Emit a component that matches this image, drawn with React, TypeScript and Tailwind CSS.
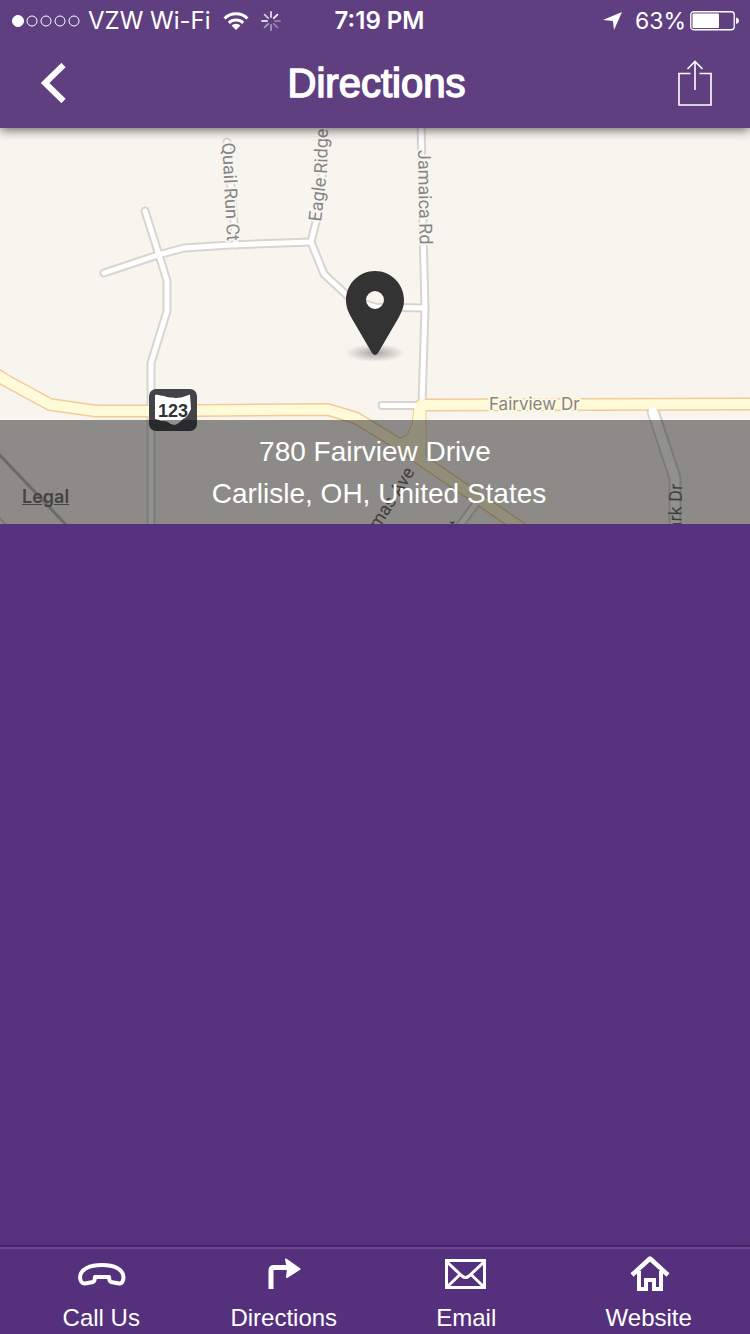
const StatusBar = () => {
  return (
    <div className="grid h-[42px] grid-cols-[1fr_auto_1fr] items-center pl-3 pr-[11px] font-[Inter,sans-serif] text-2xl leading-7">
      <div className="flex items-center">
        <svg className="h-3 w-[68px]" viewBox="0 0 68 12" fill="none" stroke="white">
          <circle cx="6" cy="6" r="5.5" fill="white" />
          <circle cx="20" cy="6" r="5" />
          <circle cx="34" cy="6" r="5" />
          <circle cx="48" cy="6" r="5" />
          <circle cx="62" cy="6" r="5" />
        </svg>
        <span className="ml-2 whitespace-nowrap">VZW Wi-Fi</span>
        <svg className="ml-3 h-[18px] w-[26px]" viewBox="0 0 26 18" fill="none" stroke="white" strokeWidth="3">
          <path d="M1.5 6.5a16.5 16.5 0 0 1 23 0" />
          <path d="M5.800 10.800a10.400 10.400 0 0 1 14.400 0" />
          <path d="M13 18l-4.500-4.500a6.500 6.500 0 0 1 9 0z" fill="white" stroke="none" />
        </svg>
        <svg className="ml-3 h-5 w-5" viewBox="0 0 20 20" stroke="white" strokeWidth="1.8" strokeLinecap="round">
          <path d="M10 1v5" opacity=".8" />
          <path d="M16.400 3.600l-3.600 3.600" />
          <path d="M19 10h-5" opacity=".3" />
          <path d="M16.400 16.400l-3.600-3.600" opacity=".35" />
          <path d="M10 19v-5" opacity=".45" />
          <path d="M3.600 16.400l3.600-3.600" opacity=".5" />
          <path d="M1 10h5" opacity=".8" />
          <path d="M3.600 3.600l3.600 3.600" opacity=".7" />
        </svg>
      </div>
      <span className="pl-2 font-semibold">7:19 PM</span>
      <div className="flex items-center justify-end">
        <svg className="mr-3 h-[18px] w-5" viewBox="0 0 20 18" fill="white">
          <path d="M19 0L11 18L10 9L0 8z" />
        </svg>
        <span className="text-[23px]">63%</span>
        <svg className="ml-1 h-5 w-[49px]" viewBox="0 0 49 20">
          <rect x=".75" y=".75" width="43.5" height="18" rx="3" fill="none" stroke="white" strokeWidth="1.3" />
          <rect x="2.5" y="2.5" width="26.5" height="14.5" rx="1" fill="white" />
          <path d="M46 6.500c4 1 4 5.500 0 6.500z" fill="white" />
        </svg>
      </div>
    </div>
  );
};

const NavBar = () => {
  return (
    <div className="flex h-[86px] items-center justify-between pb-1 pl-[41px] pr-[38px]">
      <button type="button" aria-label="Back" className="flex w-[34px] items-center">
        <svg className="h-10 w-[25px]" viewBox="0 0 25 40" fill="none" stroke="white" strokeWidth="6">
          <path d="M22.500 2L4 20l18.500 18" />
        </svg>
      </button>
      <h1 className="text-[40px] leading-[44px] [-webkit-text-stroke:1.5px_white]">Directions</h1>
      <button type="button" aria-label="Share" className="flex w-[34px] items-center">
        <svg className="h-[46px] w-[34px]" viewBox="0 0 34 46" fill="none" stroke="white" strokeWidth="1.6">
          <path d="M12.500 13.500H1v31.500h32V13.500H21.500" />
          <path d="M17 30V1.500M9.500 9L17 1.500L24.500 9" />
        </svg>
      </button>
    </div>
  );
};

const minorRoads = [
  "M227 142L236 245",
  "M104 273L158 255L184 248L230 245L311 242",
  "M145 211L159 255L167 281V311L151 363V530",
  "M323 120L322 180L316 222L311 242L324 274L352 300L375 307L424 308",
  "M421 120L423 230L425 308L422 405",
  "M382 405.500H420",
  "M475 505L455 532",
];

const majorRoads = [
  "M-10 370L5 380L50 404.500L96 411H145L328 409.500L356 418L402 446L420 459L524 530",
  "M421 405L760 404",
];

const junction = "M415 408L413 424L408 436L398 440L420 460L425 457V408z";

const StreetMap = () => {
  return (
    <svg
      className="block h-full w-full"
      viewBox="0 128 750 396"
      preserveAspectRatio="xMidYMid slice"
      fill="none"
      strokeLinejoin="round"
      strokeLinecap="round"
    >
      <defs>
        <radialGradient id="pinShadow">
          <stop offset="0" stopColor="#555" stopOpacity=".5" />
          <stop offset="1" stopColor="#555" stopOpacity="0" />
        </radialGradient>
        <path id="eagleRidge" d="M321 222L326 180Q328 165 328 100" />
      </defs>

      <path d="M-5 450L70 529" stroke="#bdbab4" strokeWidth="3" />
      <path d="M-5 513L8 527" stroke="#cfccc4" strokeWidth="2" />

      <g stroke="#d8d5d1" strokeWidth="9">
        {minorRoads.map((d) => (
          <path key={d} d={d} />
        ))}
        <path d="M652 408L675 478V530" strokeWidth="13" />
      </g>
      <g stroke="#f1cb9b" strokeWidth="13">
        {majorRoads.map((d) => (
          <path key={d} d={d} />
        ))}
        <path d={junction} strokeWidth="3" />
      </g>
      <g stroke="white" strokeWidth="5">
        {minorRoads.map((d) => (
          <path key={d} d={d} />
        ))}
      </g>
      <g stroke="#fffbd9" strokeWidth="10">
        {majorRoads.map((d) => (
          <path key={d} d={d} />
        ))}
        <path d={junction} fill="#fffbd9" strokeWidth="1" />
      </g>
      <path d="M653 412L675 478V530" stroke="white" strokeWidth="9" />

      <g
        className="font-[Roboto,sans-serif] text-[18px]"
        fill="#858585"
        stroke="#f8f5ee"
        strokeWidth="4"
        paintOrder="stroke"
      >
        <text transform="translate(222 143) rotate(87)">Quail Run Ct</text>
        <text transform="translate(418 150) rotate(89)">Jamaica Rd</text>
        <text>
          <textPath href="#eagleRidge">Eagle Ridge</textPath>
        </text>
        <text x="489" y="410" className="font-[Inter,sans-serif] text-[17px]" stroke="#fdf8e2">
          Fairview Dr
        </text>
      </g>
      <g className="font-[Roboto,sans-serif] text-[18px]" fill="#6a6a6a" textAnchor="end">
        <text transform="translate(415 472) rotate(-58)">Thomas Ave</text>
        <text transform="translate(682 484) rotate(-89)">Park Dr</text>
        <text transform="translate(462 526) rotate(-55)">Ct</text>
      </g>

      <rect x="149" y="389" width="48" height="42" rx="7" fill="#444347" />
      <path
        d="M155 395C159 394 160 396 164 396C168 398 172 397 175 398C180 398 184 397 190 394.500L191 409C189 413 188 416 185 418C182 419 181 422 177 424C174 426 170 424 168 422C164 420 161 422 159 420L155 419z"
        fill="white"
      />
      <text
        x="173"
        y="417"
        textAnchor="middle"
        className="font-['Liberation_Sans',sans-serif] text-[18px] font-bold"
        fill="#333"
      >
        123
      </text>

      <ellipse cx="375" cy="353" rx="30" ry="9" fill="url(#pinShadow)" />
      <path
        fillRule="evenodd"
        d="M375 271C391 271 404 284 404 300C404 307 402 311 399 317L378 353Q375 357 372 353L351 317C348 311 346 307 346 300C346 284 359 271 375 271zM375 291A9 9 0 1 0 375 309A9 9 0 1 0 375 291z"
        fill="#333"
      />
    </svg>
  );
};

const tabs = [
  {
    label: "Call Us",
    icon: (
      <path d="M25 8C37 8 46 12 46.500 20C46.500 24 45 27 42 26.500L34 25C31.500 24 32.500 21.500 32 20H18C17.500 21.500 18.500 24 16 25L8 26.500C5 27 3 24 3 20C3.500 12 13 8 25 8z" />
    ),
  },
  {
    label: "Directions",
    icon: (
      <>
        <path d="M11 32V13.500Q11 10.500 14 10.500H28" strokeWidth="5" />
        <path d="M26 2.500L39.500 12L27 20L28 12z" fill="white" strokeWidth="2" />
      </>
    ),
  },
  {
    label: "Email",
    icon: (
      <>
        <path d="M4.500 3.500H42.500V30.500H4.500z" strokeWidth="3" strokeLinejoin="miter" />
        <path d="M5 5L20 19Q23.500 22 27 19L42 5M5 30L18 17.500M42 30L29 17.500" strokeWidth="3" />
      </>
    ),
  },
  {
    label: "Website",
    icon: (
      <>
        <path d="M7 18L25 1.500L43 18" strokeWidth="4.5" />
        <path d="M14 14V32H21V23H29V32H36V14" strokeLinejoin="miter" />
      </>
    ),
  },
];

const TabBar = () => {
  return (
    <nav className="mt-auto border-t-2 border-[#45256a] bg-[#55307c]">
      <div className="grid grid-cols-4 border-t-2 border-[#68478c] px-2.5 pt-2 pb-0.5">
        {tabs.map((tab) => (
          <a
            key={tab.label}
            href={`#${tab.label.toLowerCase().replace(" ", "-")}`}
            className="flex flex-col items-center text-2xl leading-7"
          >
            <svg
              className="mb-3 h-[35px] w-12 overflow-visible"
              viewBox="0 0 48 35"
              fill="none"
              stroke="white"
              strokeWidth="4"
              strokeLinejoin="round"
            >
              {tab.icon}
            </svg>
            <span>{tab.label}</span>
          </a>
        ))}
      </div>
    </nav>
  );
};

export default function App() {
  return (
    <div className="flex min-h-screen flex-col bg-[#56317d] font-['Liberation_Sans',Arial,sans-serif] text-white">
      <header className="relative z-10 bg-[#5f3f80] shadow-[0_2px_10px_rgba(0,0,0,0.6)]">
        <StatusBar />
        <NavBar />
      </header>
      <main>
        <section className="relative h-[396px] overflow-hidden bg-[#f8f5ee]">
          <StreetMap />
          <div className="absolute inset-x-0 bottom-0 bg-[#0a0a08]/45 px-5 pt-[11px] pb-[9px]">
            <address className="text-center text-[28px] leading-[42px] not-italic">
              780 Fairview Drive
              <br />
              <span className="pl-2">Carlisle, OH, United States</span>
            </address>
            <a
              href="#legal"
              className="absolute bottom-4 left-[22px] font-[Inter,sans-serif] text-[18px] leading-[22px] font-semibold text-[#444] underline"
            >
              Legal
            </a>
          </div>
        </section>
      </main>
      <TabBar />
    </div>
  );
}
